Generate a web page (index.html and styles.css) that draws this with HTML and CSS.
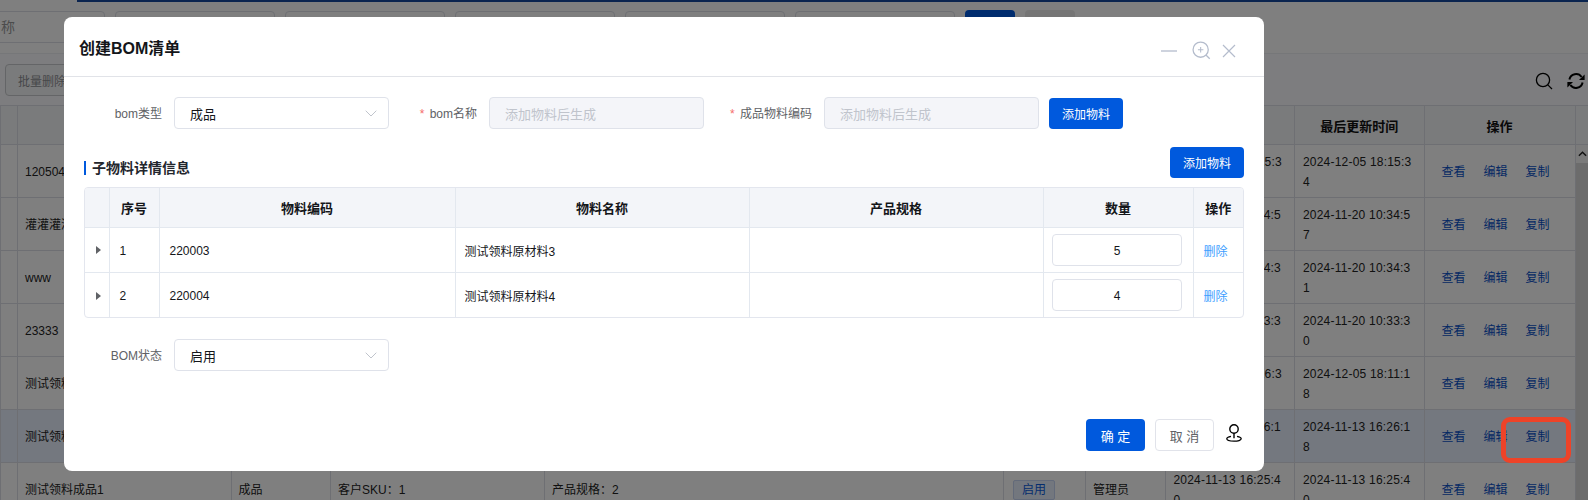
FILE: index.html
```html
<!DOCTYPE html>
<html lang="zh">
<head>
<meta charset="utf-8">
<title>创建BOM清单</title>
<link rel="stylesheet" href="styles.css">
</head>
<body>
<div class="page">
  <div class="topbar"><div class="topbar-fill"></div></div>
  <div class="filters">
    <div class="filter filter-first"><span>称</span></div>
    <div class="filter"></div>
    <div class="filter"></div>
    <div class="filter"></div>
    <div class="filter"></div>
    <div class="filter"></div>
    <div class="fbtn fbtn-blue"></div>
    <div class="fbtn fbtn-gray"></div>
  </div>
  <div class="card">
    <div class="toolbar">
      <button class="batch">批量删除</button>
      <div class="tools">
        <svg class="tool" viewBox="0 0 18 18"><circle cx="8" cy="8" r="6.6" fill="none" stroke="#000" stroke-width="1.3"/><path d="M12.8 12.8l4.2 4.2" stroke="#000" stroke-width="1.2"/></svg>
        <svg class="tool" viewBox="0 0 18 18"><path d="M2.4 7.5A6.8 6.8 0 0 1 14.6 5" fill="none" stroke="#000" stroke-width="2"/><path d="M17.6 2.4v5.6H12z" fill="#000"/><path d="M15.6 10.5A6.8 6.8 0 0 1 3.4 13" fill="none" stroke="#000" stroke-width="2"/><path d="M.4 15.6V10H6z" fill="#000"/></svg>
      </div>
    </div>
    <div class="grid-wrap">
      <table class="grid">
        <colgroup><col class="g0"><col class="g1"><col class="g2"><col class="g3"><col class="g4"><col class="g5"><col class="g6"><col class="g7"><col class="g8"><col class="g9"><col class="g10"></colgroup>
        <thead>
          <tr><th></th><th></th><th></th><th></th><th></th><th></th><th></th><th></th><th>最后更新时间</th><th>操作</th><th></th></tr>
        </thead>
        <tbody>
          <tr><td></td><td>120504</td><td></td><td></td><td></td><td></td><td></td><td class="num">2024-12-05 18:15:34</td><td class="num">2024-12-05 18:15:34</td><td class="ops"><a>查看</a><a>编辑</a><a>复制</a></td><td class="sb sb-top" rowspan="7"><span class="sb-btn"><svg viewBox="0 0 10 6" class="sb-arrow"><path d="M1 5l4-4 4 4" fill="none" stroke="#222" stroke-width="1.6"/></svg></span></td></tr>
          <tr><td></td><td>灌灌灌灌</td><td></td><td></td><td></td><td></td><td></td><td class="num">2024-11-20 10:34:57</td><td class="num">2024-11-20 10:34:57</td><td class="ops"><a>查看</a><a>编辑</a><a>复制</a></td></tr>
          <tr><td></td><td>www</td><td></td><td></td><td></td><td></td><td></td><td class="num">2024-11-20 10:34:31</td><td class="num">2024-11-20 10:34:31</td><td class="ops"><a>查看</a><a>编辑</a><a>复制</a></td></tr>
          <tr><td></td><td>23333</td><td></td><td></td><td></td><td></td><td></td><td class="num">2024-11-20 10:33:30</td><td class="num">2024-11-20 10:33:30</td><td class="ops"><a>查看</a><a>编辑</a><a>复制</a></td></tr>
          <tr><td></td><td>测试领料</td><td></td><td></td><td></td><td></td><td></td><td class="num">2024-12-05 18:16:36</td><td class="num">2024-12-05 18:11:18</td><td class="ops"><a>查看</a><a>编辑</a><a>复制</a></td></tr>
          <tr class="hl"><td></td><td>测试领料</td><td></td><td></td><td></td><td></td><td></td><td class="num">2024-11-13 16:26:18</td><td class="num">2024-11-13 16:26:18</td><td class="ops"><a>查看</a><a>编辑</a><a>复制</a></td></tr>
          <tr><td></td><td>测试领料成品1</td><td>成品</td><td>客户SKU：1</td><td>产品规格：2</td><td><span class="tag">启用</span></td><td>管理员</td><td class="num">2024-11-13 16:25:40</td><td class="num">2024-11-13 16:25:40</td><td class="ops"><a>查看</a><a>编辑</a><a>复制</a></td></tr>
        </tbody>
      </table>
    </div>
  </div>
</div>

<div class="overlay"></div>
<div class="annotation"></div>

<div class="modal">
  <div class="modal-head">
    <h2 class="modal-title">创建BOM清单</h2>
    <div class="win-icons">
      <svg class="wi wi-min" viewBox="0 0 16 16"><path d="M0 8h16" stroke="#b4bccc" stroke-width="1.3"/></svg>
      <svg class="wi wi-zoom" viewBox="0 0 18 18"><circle cx="8.2" cy="8.2" r="7.2" fill="none" stroke="#b4bccc" stroke-width="1.2"/><path d="M8.2 5.6v5.2M5.6 8.2h5.2" stroke="#b4bccc" stroke-width="1"/><path d="M13.2 13.2l3.6 3.6" stroke="#b4bccc" stroke-width="1.2"/></svg>
      <svg class="wi wi-close" viewBox="0 0 14 14"><path d="M1 1l12 12M13 1L1 13" stroke="#b4bccc" stroke-width="1.2"/></svg>
    </div>
  </div>

  <div class="form-row">
    <div class="field">
      <label class="lbl lbl-88">bom类型</label>
      <div class="ctl"><span>成品</span><svg class="chev" viewBox="0 0 12 7"><path d="M.7.7L6 6l5.3-5.3" fill="none" stroke="#c0c4cc" stroke-width="1"/></svg></div>
    </div>
    <div class="field">
      <label class="lbl lbl-88"><i>*</i> bom名称</label>
      <div class="ctl ctl-off"><span>添加物料后生成</span></div>
    </div>
    <div class="field">
      <label class="lbl lbl-108"><i>*</i> 成品物料编码</label>
      <div class="ctl ctl-off"><span>添加物料后生成</span></div>
    </div>
    <button class="btn btn-primary btn-add">添加物料</button>
  </div>

  <div class="section">
    <div class="section-title">子物料详情信息</div>
    <button class="btn btn-primary btn-add">添加物料</button>
  </div>

  <div class="sub-wrap">
    <table class="sub">
      <colgroup><col class="s0"><col class="s1"><col class="s2"><col class="s3"><col class="s4"><col class="s5"><col class="s6"></colgroup>
      <thead>
        <tr><th></th><th>序号</th><th>物料编码</th><th>物料名称</th><th>产品规格</th><th>数量</th><th>操作</th></tr>
      </thead>
      <tbody>
        <tr><td class="exp"><svg viewBox="0 0 5 8" class="tri"><path d="M0 0l5 4-5 4z" fill="#606266"/></svg></td><td class="digits">1</td><td class="digits">220003</td><td>测试领料原材料3</td><td></td><td class="qty"><div class="qty-box">5</div></td><td class="del">删除</td></tr>
        <tr><td class="exp"><svg viewBox="0 0 5 8" class="tri"><path d="M0 0l5 4-5 4z" fill="#606266"/></svg></td><td class="digits">2</td><td class="digits">220004</td><td>测试领料原材料4</td><td></td><td class="qty"><div class="qty-box">4</div></td><td class="del">删除</td></tr>
      </tbody>
    </table>
  </div>

  <div class="form-row form-row-status">
    <div class="field">
      <label class="lbl lbl-88">BOM状态</label>
      <div class="ctl"><span>启用</span><svg class="chev" viewBox="0 0 12 7"><path d="M.7.7L6 6l5.3-5.3" fill="none" stroke="#c0c4cc" stroke-width="1"/></svg></div>
    </div>
  </div>

  <div class="modal-foot">
    <button class="btn btn-primary btn-foot">确 定</button>
    <button class="btn btn-plain btn-foot">取 消</button>
    <svg class="pin" viewBox="0 0 16 18"><circle cx="8" cy="5" r="4.2" fill="none" stroke="#000" stroke-width="1.4"/><path d="M8 9.2v5" stroke="#000" stroke-width="1.4"/><path d="M5 12.4C2.4 12.9.8 13.7.8 14.8c0 1.4 3.2 2.4 7.2 2.4s7.2-1 7.2-2.4c0-1.1-1.6-1.9-4.2-2.4" fill="none" stroke="#000" stroke-width="1.3"/></svg>
  </div>
</div>
</body>
</html>
```
FILE: styles.css
```css
* { box-sizing: border-box; }
html, body { margin: 0; padding: 0; height: 500px; overflow: hidden; }
body {
  position: relative;
  width: 1588px;
  background: #fff;
  font-family: "Liberation Sans", "Noto Sans CJK SC", sans-serif;
  font-size: 12px;
  color: #303133;
}
button { font-family: inherit; cursor: pointer; }

/* page behind the dialog */
.page { height: 500px; overflow: hidden; display: flex; flex-direction: column; }
.topbar { height: 2px; padding-left: 77px; flex: none; }
.topbar-fill { height: 2px; background: #14489f; }
.filters { flex: none; height: 51px; padding-top: 8px; display: flex; gap: 10px; margin-left: -55px; align-items: flex-start; }
.filter { width: 160px; height: 32px; border: 1px solid #dcdfe6; border-radius: 4px; margin-top: 1px; color: #999; font-size: 14px; line-height: 30px; padding-left: 55px; }
.filter-first { border-radius: 0 4px 4px 0; }
.fbtn { width: 50px; height: 32px; border-radius: 4px; }
.fbtn-blue { background: #0059dd; }
.fbtn-gray { background: #ebebeb; }
.card { flex: 1; background: #fafbfe; border-top: 1px solid #eceef2; display: flex; flex-direction: column; }
.toolbar { height: 51px; flex: none; padding: 10px 3px 0 5px; display: flex; justify-content: space-between; align-items: flex-start; }
.batch { width: 90px; height: 32px; border: 1px solid #c8cace; border-radius: 4px; background: #f5f6f8; color: #8d8f94; font-size: 12px; text-align: left; padding-left: 12px; }
.tools { display: flex; gap: 14px; padding-top: 8px; }
.tool { width: 18px; height: 18px; display: block; }
.grid-wrap { flex: none; }
.grid { width: 1588px; border-collapse: collapse; table-layout: fixed; background: #fff; }
.g0 { width: 17px; } .g1 { width: 213.5px; } .g2 { width: 99.5px; } .g3 { width: 214px; } .g4 { width: 459px; } .g5 { width: 82px; } .g6 { width: 79.5px; } .g7 { width: 129.5px; } .g8 { width: 129.5px; } .g9 { width: 151px; } .g10 { width: 13.5px; }
.grid th { height: 39px; padding-top: 2px; background: #f5f6f9; border: 1px solid #dcdfe6; font-size: 13px; color: #111; font-weight: 700; }
.grid th:last-child { border-right: 0; }
.grid td { height: 53px; border: 1px solid #dcdfe6; padding: 2px 7px 0; color: #222; line-height: 20px; }
.grid .num { word-break: break-all; letter-spacing: .2px; padding: 2px 8px 0; }
.grid tr.hl td { background: #e8f0fe; }
.grid .ops { padding: 2px 0 0 17px; white-space: nowrap; }
.grid .ops a { color: #0a52c8; margin-right: 18px; }
.grid .sb { padding: 0; background: #d8d8d8; border: 0; vertical-align: top; }
.sb-btn { display: flex; height: 18px; align-items: center; justify-content: center; background: #f6f6f6; }
.sb-arrow { width: 9px; height: 6px; }
.tag { display: inline-block; width: 42px; height: 20px; line-height: 18px; border: 1px solid #c6d4f2; background: #e6eefc; color: #0b5bdc; text-align: center; border-radius: 2px; margin-left: 2px; }

.overlay { position: absolute; inset: 0; background: rgba(0, 0, 0, .5); }
.annotation { position: absolute; left: 1501px; top: 417px; width: 70px; height: 46px; border: 5px solid #ee4328; border-radius: 9px; }

/* dialog */
.modal {
  position: absolute; left: 64px; top: 17px; width: 1200px; height: 454px;
  background: #fff; border-radius: 8px; display: flex; flex-direction: column;
}
.modal-head { flex: none; height: 60px; border-bottom: 1px solid #e1e3e8; padding: 0 28px 0 15px; display: flex; align-items: center; justify-content: space-between; }
.modal-title { margin: 0; font-size: 16px; font-weight: 700; color: #14161a; }
.win-icons { display: flex; align-items: center; gap: 14px; padding-top: 8px; }
.wi { display: block; }
.wi-min { width: 16px; height: 16px; }
.wi-zoom { width: 19px; height: 19px; margin-left: 1px; }
.wi-close { width: 14px; height: 14px; margin-left: -3px; }

.form-row { display: flex; align-items: center; padding-left: 10px; margin-top: 20px; flex: none; }
.form-row-status { margin-top: 21px; }
.field { display: flex; align-items: center; }
.lbl { display: block; margin: 0 12px 2px 0; text-align: right; color: #606266; font-size: 12px; }
.lbl i { font-style: normal; color: #f56c6c; margin-right: 2px; }
.lbl-88 { width: 88px; }
.lbl-108 { width: 108px; }
.ctl { width: 215px; height: 32px; border: 1px solid #dfe2ea; border-radius: 4px; padding: 0 15px; display: flex; align-items: center; justify-content: space-between; font-size: 13px; color: #14161a; background: #fff; }
.ctl-off { background: #f4f5f9; color: #c0c4cc; }
.chev { width: 12px; height: 7px; margin-right: -4px; }

.btn { border: 0; border-radius: 4px; font-size: 12px; padding: 0; }
.btn-primary { background: #0059dd; color: #fff; }
.btn-add { width: 74px; height: 31px; margin-left: 10px; }
.btn-plain { background: #fff; color: #606266; border: 1px solid #e1e3ea; }
.btn-foot { width: 59px; height: 32px; font-size: 13px; }

.section { display: flex; justify-content: space-between; align-items: flex-end; margin: 18px 20px 0 20px; flex: none; }
.section-title { font-size: 14px; line-height: 14px; font-weight: 700; color: #23262d; border-left: 2px solid #0059dd; padding-left: 6px; margin-bottom: 3px; }
.section .btn-add { margin: 0; }

.sub-wrap { margin: 9px 20px 0 20px; border: 1px solid #e3e6ee; border-radius: 4px; overflow: hidden; flex: none; }
.sub { width: 100%; border-collapse: collapse; table-layout: fixed; }
.s0 { width: 24px; } .s1 { width: 50px; } .s2 { width: 296px; } .s3 { width: 294px; } .s4 { width: 294px; } .s5 { width: 150px; } .s6 { width: 50px; }
.sub th { height: 39px; padding-top: 2px; background: #f3f5f9; border: 1px solid #e3e8ef; border-top: 0; font-size: 13px; font-weight: 700; color: #14161a; }
.sub td { height: 45px; border: 1px solid #e3e8ef; padding: 1px 9px 0; font-size: 12px; color: #14161a; }
.sub .digits { padding: 3px 10px 0; }
.sub tbody tr:last-child td { border-bottom: 0; }
.sub th:first-child, .sub td:first-child { border-left: 0; }
.sub th:last-child, .sub td:last-child { border-right: 0; }
.sub .exp { padding: 0 0 0 4px; text-align: center; }
.tri { width: 5px; height: 8px; display: inline-block; vertical-align: middle; }
.sub .qty { padding: 0 11px 0 8px; }
.qty-box { height: 32px; padding-left: 1px; border: 1px solid #dfe2ea; border-radius: 4px; text-align: center; line-height: 33px; font-size: 12px; }
.sub .del { color: #409eff; padding-left: 10px; }

.modal-foot { margin-top: auto; margin-bottom: 20px; padding-right: 22px; display: flex; justify-content: flex-end; align-items: center; gap: 10px; flex: none; }
.pin { width: 16px; height: 18px; margin: -4px 0 0 2px; display: block; }
```
